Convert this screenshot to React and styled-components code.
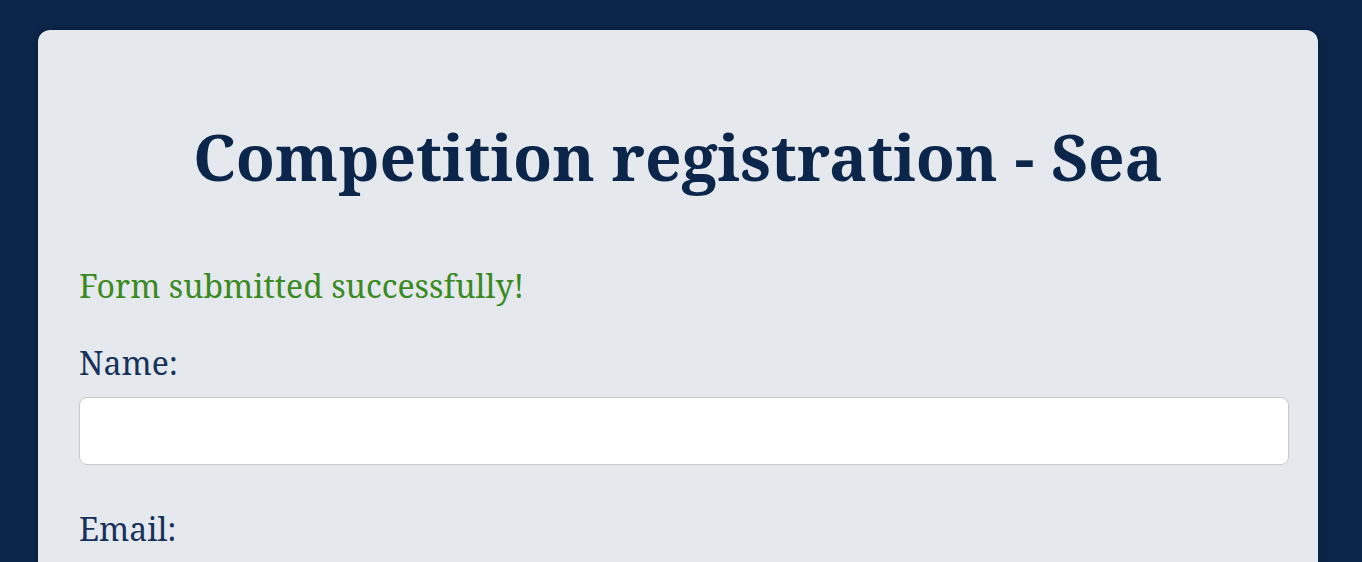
import React from "react";
import styled, { createGlobalStyle } from "styled-components";

const Global = createGlobalStyle`
  html, body { margin: 0; padding: 0; }
  body {
    background: #0b264a;
    font-family: "Noto Serif", "DejaVu Serif", serif;
    overflow: hidden;
  }
`;

const Page = styled.div`
  padding: 30px 44px 0 38px;
  min-height: 562px;
  box-sizing: border-box;
`;

const Card = styled.main`
  background: #e5e9ed;
  border-radius: 12px;
  padding: 41px;
  box-shadow: 0 0 8px rgba(0, 0, 0, 0.25);
  min-height: 600px;
`;

const Title = styled.h1`
  margin: 48px 0 0;
  text-align: center;
  color: #0b264a;
  font-size: 64px;
  font-weight: 700;
  line-height: 1.2;
`;

const Success = styled.p`
  margin: 69px 0 0;
  color: #3a8a22;
  font-size: 32px;
  line-height: 1.3;
`;

const Field = styled.div`
  display: flex;
  flex-direction: column;
  align-items: flex-start;
  margin-top: ${(p) => p.$top}px;
`;

const Label = styled.label`
  color: #17325a;
  font-size: 32px;
  line-height: 1.3;
  margin-bottom: 13px;
`;

const Input = styled.input`
  width: 100%;
  height: 56px;
  box-sizing: content-box;
  border: 1px solid #c9c9c9;
  border-radius: 8px;
  background: #fff;
  font-size: 24px;
  padding: 5px;
`;

export default function App() {
  return (
    <>
      <Global />
      <Page>
        <Card>
          <Title>Competition registration - Sea</Title>
          <Success>Form submitted successfully!</Success>
          <Field $top={36}>
            <Label htmlFor="name">Name:</Label>
            <Input id="name" type="text" />
          </Field>
          <Field $top={43}>
            <Label htmlFor="email">Email:</Label>
            <Input id="email" type="email" />
          </Field>
        </Card>
      </Page>
    </>
  );
}
